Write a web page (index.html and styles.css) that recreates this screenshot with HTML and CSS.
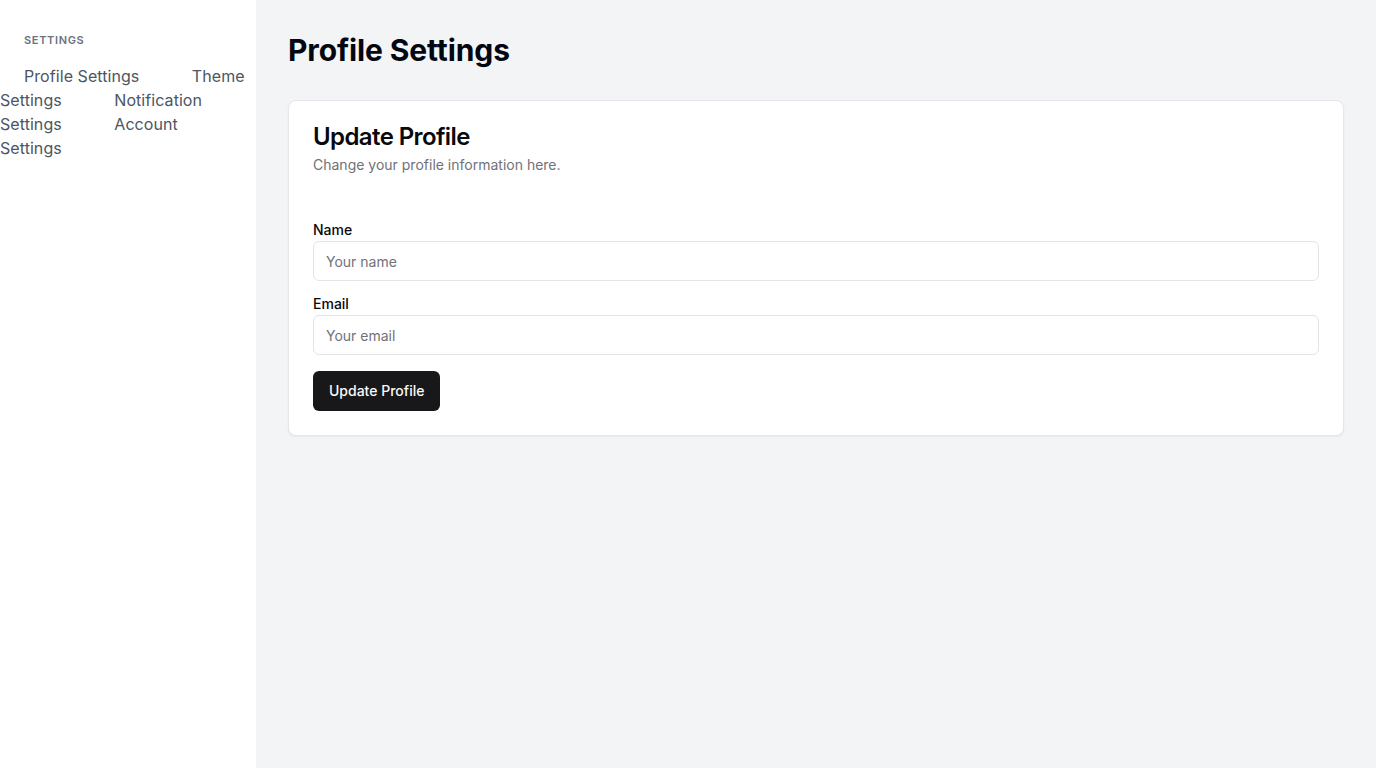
FILE: index.html
```html
<!DOCTYPE html>
<html lang="en">
<head>
<meta charset="utf-8">
<title>Profile Settings</title>
<link rel="stylesheet" href="styles.css">
</head>
<body>
<div class="layout">
  <aside class="sidebar">
    <h2 class="sidebar-title">Settings</h2>
    <nav class="nav">
      <a class="nav-link" href="#">Profile Settings</a>
      <a class="nav-link" href="#">Theme Settings</a>
      <a class="nav-link" href="#">Notification Settings</a>
      <a class="nav-link" href="#">Account Settings</a>
    </nav>
  </aside>
  <main class="main">
    <h1 class="page-title">Profile Settings</h1>
    <section class="card">
      <header class="card-header">
        <h3 class="card-title">Update Profile</h3>
        <p class="card-desc">Change your profile information here.</p>
      </header>
      <form class="card-content">
        <div class="field">
          <label class="label" for="name">Name</label>
          <input class="input" id="name" type="text" placeholder="Your name">
        </div>
        <div class="field">
          <label class="label" for="email">Email</label>
          <input class="input" id="email" type="email" placeholder="Your email">
        </div>
        <button class="button" type="button">Update Profile</button>
      </form>
    </section>
  </main>
</div>
</body>
</html>
```

FILE: styles.css
```css
* { box-sizing: border-box; }
html, body { margin: 0; padding: 0; }
body {
  font-family: Inter, "Noto Sans", "Liberation Sans", sans-serif;
  color: #09090b;
  background: #f3f4f6;
}
.layout {
  display: flex;
  min-height: 768px;
}
.sidebar {
  width: 256px;
  flex-shrink: 0;
  background: #ffffff;
  padding-top: 32px;
}
.sidebar-title {
  margin: 0 0 16px;
  padding-left: 24px;
  font-size: 11px;
  line-height: 16px;
  font-weight: 600;
  text-transform: uppercase;
  letter-spacing: 0.06em;
  color: #6b7280;
}
.nav {
  font-size: 16px;
  line-height: 24px;
}
.nav-link {
  padding: 0 24px;
  color: #4b5563;
  text-decoration: none;
  letter-spacing: 0.004em;
}
.main {
  flex: 1;
  padding: 32px;
}
.page-title {
  margin: 0 0 32px;
  font-size: 30px;
  line-height: 36px;
  font-weight: 700;
  color: #030712;
  letter-spacing: -0.004em;
}
.card {
  background: #ffffff;
  border: 1px solid #e5e7eb;
  border-radius: 8px;
  box-shadow: 0 1px 2px rgba(0,0,0,0.05);
}
.card-header {
  padding: 24px 24px 45px;
  display: flex;
  flex-direction: column;
  gap: 6px;
}
.card-title {
  margin: 0;
  font-size: 24px;
  line-height: 24px;
  font-weight: 600;
  letter-spacing: -0.025em;
}
.card-desc {
  margin: 0;
  font-size: 14px;
  line-height: 20px;
  color: #71717a;
}
.card-content {
  padding: 0 24px 24px;
  display: flex;
  flex-direction: column;
  align-items: flex-start;
}
.field {
  width: 100%;
  display: flex;
  flex-direction: column;
  margin-bottom: 13px;
}
.field + .field { margin-bottom: 16px; }
.label {
  font-size: 14px;
  line-height: 20px;
  font-weight: 500;
  margin-bottom: 1px;
}
.input {
  height: 40px;
  width: 100%;
  border: 1px solid #e4e4e7;
  border-radius: 6px;
  padding: 0 12px;
  font-family: inherit;
  font-size: 14px;
  color: #09090b;
  background: #ffffff;
  outline: none;
}
.input::placeholder { color: #71717a; }
.button {
  height: 40px;
  padding: 0 16px;
  border: none;
  border-radius: 6px;
  background: #18181b;
  color: #fafafa;
  font-family: inherit;
  font-size: 14px;
  font-weight: 500;
  line-height: 20px;
  padding-bottom: 1px;
  cursor: pointer;
}
```
